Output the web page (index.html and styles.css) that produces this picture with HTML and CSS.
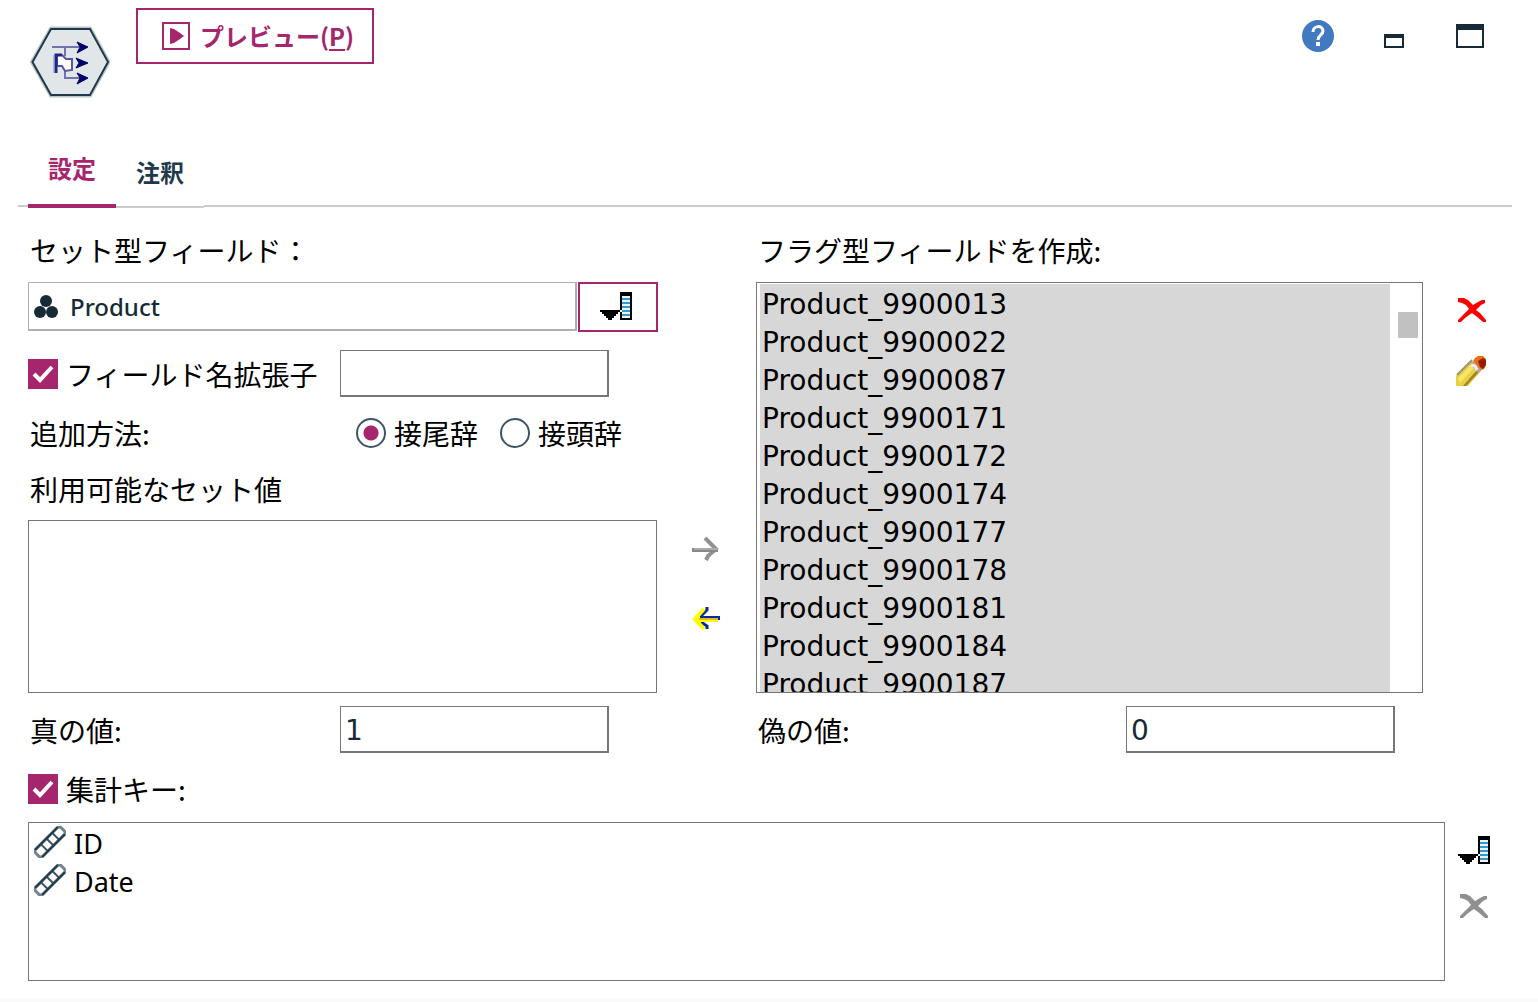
FILE: index.html
```html
<!DOCTYPE html>
<html lang="ja">
<head>
<meta charset="utf-8">
<meta name="viewport" content="width=device-width, initial-scale=1">
<title>フラグ設定</title>
<link rel="stylesheet" href="styles.css">
</head>
<body>
<svg class="defs" aria-hidden="true">
  <symbol id="picker" viewBox="0 0 32 28">
    <path d="M0 18h20v2h-2v2h-2v2h-2v2h-2v2H8v-2H6v-2H4v-2H2v-2H0z"/>
    <path d="M20 0h12v28H20z"/>
    <path d="M22 4h8v22h-8z" fill="#e8f6fc"/>
    <path d="M22 7h8M22 11h8M22 15h8M22 19h8M22 23h8" stroke="#3399cc" stroke-width="2"/>
    <path d="M20 18h2v2h-2z" fill="#fff"/>
  </symbol>
  <symbol id="cross" viewBox="0 0 28 24">
    <path d="M0 0h6l4 2 5 5 5-3 4-2h3v3l-4 2-5 5 4 3 6 7v2h-3l-7-6-4-3-3 2-4 3-4 4H0v-2l4-4 4-4 3-3-3-4-4-2-4-1z" fill="currentColor"/>
  </symbol>
  <symbol id="chain" viewBox="0 0 32 32">
    <g transform="rotate(-45 16 16)" fill="none">
      <rect x="-2" y="11" width="36" height="10" rx="3" stroke="#75858f" stroke-width="3"/>
      <path d="M8 11v10M16 11v10M24 11v10" stroke="#3c5364" stroke-width="2"/>
      <path d="M0 11h32M0 21h32" stroke="#20394a" stroke-width="2"/>
    </g>
  </symbol>
</svg>

<form class="dialog">
  <header class="header">
    <svg class="node-icon" width="80" height="72" viewBox="30 26 80 72" aria-hidden="true">
      <path d="M51 28.500h39L108.500 62 90 95.500H51L32 62z" fill="#e1e6e9" stroke="#b9c4ca" stroke-width="4"/>
      <path d="M51 29h39L108 62 90 95H51L32.500 62z" fill="#e1e6e9" stroke="#20394a" stroke-width="2"/>
      <path d="M52 47h27M65 48v8M65 70v8h15" fill="none" stroke="#7272b0" stroke-width="2"/>
      <path d="M57 55h5l4 4h6v11l-7 1-3-5h-5z" fill="#fff" stroke="#5656a5" stroke-width="2"/>
      <path d="M56 73V55h6" fill="none" stroke="#24248c" stroke-width="3"/>
      <path d="M54 55v18" stroke="#6b9aca"/>
      <path d="M77 42l11 5-11 6 3-6zM76 58l12 5-12 5 3-5zM77 73l11 5-11 6 3-6z" fill="#00006c" stroke="#00006c"/>
    </svg>
    <button type="button" class="preview">
      <svg width="28" height="28" viewBox="0 0 28 28" aria-hidden="true"><path d="M1 1h26v26H1z" fill="none" stroke="#a6266e" stroke-width="2"/><path d="M8 6l4 1 3 2 3 2 4 3-4 3-3 2-3 2-4 1z" fill="#a6266e"/></svg>
      <span>プレビュー(<u>P</u>)</span>
    </button>
    <div class="window-tools">
      <button type="button" class="icon-button help" aria-label="ヘルプ">
        <svg width="32" height="32" viewBox="0 0 32 32"><circle cx="16" cy="16" r="16" fill="#427ac1"/><path d="M11 12c0-7 10-7 10-1 0 4-5 4-5 9" fill="none" stroke="#fff" stroke-width="3"/><path d="M14 22h4v4h-4z" fill="#fff"/></svg>
      </button>
      <button type="button" class="icon-button" aria-label="最小化">
        <svg width="20" height="14" viewBox="0 0 20 14"><path d="M0 0h20v14H0z" fill="#162b36"/><path d="M2 4h16v8H2z" fill="#fff"/></svg>
      </button>
      <button type="button" class="icon-button" aria-label="最大化">
        <svg width="28" height="24" viewBox="0 0 28 24"><path d="M0 0h28v24H0z" fill="#162b36"/><path d="M2 6h24v16H2z" fill="#fff"/></svg>
      </button>
    </div>
  </header>

  <nav class="tabs" role="tablist">
    <button type="button" class="tab tab-active" role="tab" aria-selected="true">設定</button>
    <button type="button" class="tab" role="tab" aria-selected="false">注釈</button>
  </nav>

  <main class="content">
    <div class="columns">
      <section class="source">
        <label class="title" for="set-field">セット型フィールド：</label>
        <div class="picker-row">
          <div class="field-box">
            <svg width="28" height="28" viewBox="32 292 28 28" aria-hidden="true"><g fill="#162b36"><circle cx="46" cy="300" r="6"/><circle cx="40" cy="311" r="6"/><circle cx="52" cy="311" r="6"/></g></svg>
            <input id="set-field" type="text" value="Product" readonly>
          </div>
          <button type="button" class="picker-button" aria-label="フィールドを選択"><svg width="32" height="28"><use href="#picker"/></svg></button>
        </div>
        <div class="form-row extension">
          <label class="option"><input type="checkbox" checked>フィールド名拡張子</label>
          <input type="text" class="text-input" aria-label="拡張子">
        </div>
        <div class="form-row method" role="radiogroup" aria-labelledby="method">
          <span id="method">追加方法:</span>
          <div class="radios">
            <label class="option"><input type="radio" name="method" checked>接尾辞</label>
            <label class="option"><input type="radio" name="method">接頭辞</label>
          </div>
        </div>
        <h2 class="title values-title" id="available">利用可能なセット値</h2>
        <ul class="list available" role="listbox" aria-labelledby="available"></ul>
      </section>

      <div class="movers">
        <button type="button" class="icon-button" aria-label="追加">
          <svg width="28" height="26" viewBox="0 0 28 26"><path d="M13 2l3 3 8 8-8 7-2 4" fill="none" stroke="#929292" stroke-width="4"/><path d="M0 14h26" stroke="#888" stroke-width="4"/><path d="M2 13h24" stroke="#aaa" stroke-width="2"/></svg>
        </button>
        <button type="button" class="icon-button" aria-label="削除">
          <svg width="28" height="26" viewBox="0 0 28 26"><path d="M15 1v3l-7 7M9 16l6 4v3" fill="none" stroke="#002d94" stroke-width="3"/><path d="M12 3L3 13l9 10M2 14h24" fill="none" stroke="#ff0" stroke-width="4"/><path d="M7 13h19" stroke="#e8b52a" stroke-width="2"/><path d="M8 11h19v3" fill="none" stroke="#002d94" stroke-width="2"/></svg>
        </button>
      </div>

      <section class="target">
        <h2 class="title" id="flags">フラグ型フィールドを作成:</h2>
        <div class="list flag-list">
          <ul class="flag-items" role="listbox" aria-labelledby="flags" aria-multiselectable="true">
            <li role="option" aria-selected="true">Product_9900013</li>
            <li role="option" aria-selected="true">Product_9900022</li>
            <li role="option" aria-selected="true">Product_9900087</li>
            <li role="option" aria-selected="true">Product_9900171</li>
            <li role="option" aria-selected="true">Product_9900172</li>
            <li role="option" aria-selected="true">Product_9900174</li>
            <li role="option" aria-selected="true">Product_9900177</li>
            <li role="option" aria-selected="true">Product_9900178</li>
            <li role="option" aria-selected="true">Product_9900181</li>
            <li role="option" aria-selected="true">Product_9900184</li>
            <li role="option" aria-selected="true">Product_9900187</li>
          </ul>
          <div class="scrollbar"><div class="thumb"></div></div>
        </div>
      </section>

      <div class="target-tools">
        <button type="button" class="icon-button remove" aria-label="フラグを削除"><svg width="28" height="24"><use href="#cross"/></svg></button>
        <button type="button" class="icon-button" aria-label="編集">
          <svg width="30" height="30" viewBox="0 0 30 30"><path d="M0 20L15 5l10 10-13 15H0z" fill="#e8cf43"/><path d="M2 22L15 9l3 3L4 27z" fill="#f8e567"/><path d="M23 16L10 30H7l14-16z" fill="#9a8525"/><path d="M1 19L16 4" stroke="#9b9470" stroke-width="2"/><path d="M14 8l3-3 9 9-4 3z" fill="#aaa"/><path d="M15 9l4 1 2 4" fill="none" stroke="#eee" stroke-width="3"/><path d="M17 5l2-3 3-2h5l3 3v6l-2 4-3 1z" fill="#e8700f"/><path d="M22 5l5-3 3 2v5l-3 4-3-2z" fill="#981c00"/></svg>
        </button>
      </div>
    </div>

    <div class="columns value-fields">
      <div class="form-row"><label for="true-value">真の値:</label><input id="true-value" type="text" class="text-input" value="1"></div>
      <div class="form-row false-value"><label for="false-value">偽の値:</label><input id="false-value" type="text" class="text-input" value="0"></div>
    </div>

    <div class="keys-title"><label class="option"><input type="checkbox" checked>集計キー:</label></div>
    <div class="keys">
      <ul class="list key-list" role="listbox" aria-label="集計キー">
        <li role="option"><svg width="32" height="32"><use href="#chain"/></svg><span>ID</span></li>
        <li role="option"><svg width="32" height="32"><use href="#chain"/></svg><span>Date</span></li>
      </ul>
      <div class="key-tools">
        <button type="button" class="icon-button" aria-label="キーを選択"><svg width="32" height="28"><use href="#picker"/></svg></button>
        <button type="button" class="icon-button key-remove" aria-label="キーを削除" disabled><svg width="28" height="24"><use href="#cross"/></svg></button>
      </div>
    </div>
  </main>
</form>
</body>
</html>
```
FILE: styles.css
```css
:root {
  --accent: #a6266e;
  --ink: #162b36;
  --line: #767676;
  --ui: "Noto Sans", "Noto Sans CJK JP", sans-serif;
  --jp: "Noto Sans CJK JP", sans-serif;
}

* { box-sizing: border-box; }

body {
  margin: 0;
  background: #fafafa;
  color: #000;
  font: 28px/40px var(--jp);
}

button, input { font: inherit; }
svg { display: block; flex: none; }
ul, h2 { margin: 0; padding: 0; font: inherit; list-style: none; }
.defs { position: absolute; width: 0; height: 0; }

.dialog { background: #fff; }

.header {
  display: flex;
  align-items: flex-start;
  height: 144px;
  padding: 8px 54px 0 30px;
}
.node-icon { margin-top: 18px; }
.preview {
  display: flex;
  align-items: center;
  gap: 10px;
  height: 56px;
  margin-left: 26px;
  padding: 0 18px 0 24px;
  border: 2px solid var(--accent);
  background: #fff;
  color: var(--accent);
  font-size: 24px;
  font-weight: 700;
  line-height: 32px;
}
.preview u { text-decoration-thickness: 2px; text-underline-offset: 3px; }

.window-tools {
  display: flex;
  align-items: flex-end;
  gap: 52px;
  height: 40px;
  margin-left: auto;
}
.help { align-self: center; margin-right: -2px; margin-top: 16px; }

.icon-button {
  display: block;
  padding: 0;
  border: 0;
  background: none;
  color: inherit;
}

.tabs {
  display: flex;
  align-items: flex-end;
  height: 64px;
  margin: 0 26px 0 18px;
  padding-left: 10px;
  background: linear-gradient(#ccc, #ccc) 0 61px / 100% 2px no-repeat;
}
.tab {
  width: 88px;
  height: 60px;
  padding: 0 0 10px;
  border: 0;
  border-bottom: 2px solid #ccc;
  background: #fff;
  color: #20394a;
  font-size: 24px;
  font-weight: 700;
  line-height: 32px;
}
.tab-active {
  padding-bottom: 16px;
  border-bottom: 4px solid var(--accent);
  color: var(--accent);
}

.content { padding: 22px 0 17px 28px; }
.columns {
  display: grid;
  grid-template-columns: minmax(0, 630fr) 98px minmax(0, 667fr) 115px;
}
.title { display: block; padding-left: 2px; }
.source, .target { display: flex; flex-direction: column; }

.picker-row { display: flex; gap: 1px; margin-top: 12px; }
.field-box {
  display: flex;
  flex: 1;
  align-items: center;
  gap: 10px;
  min-width: 0;
  height: 49px;
  padding: 1px 3px 0;
  border: solid #b0b0b0;
  border-width: 1px 2px 2px 1px;
}
.field-box input {
  flex: 1;
  min-width: 0;
  height: 40px;
  padding: 0;
  border: 0;
  outline: 0;
  background: none;
  color: var(--ink);
  font-family: var(--ui);
  font-size: 24px;
  font-weight: 500;
}
.picker-button {
  display: grid;
  place-items: center;
  width: 80px;
  height: 50px;
  padding: 0 4px 2px 0;
  border: 2px solid var(--accent);
  background: #fff;
}

.form-row {
  display: grid;
  grid-template-columns: 310px 269px;
  align-items: center;
  padding-left: 2px;
}
.extension { margin-top: 18px; }
.method { margin-top: 16px; }
.values-title { margin-top: 16px; }

.text-input {
  width: 100%;
  height: 47px;
  padding: 2px 4px 0;
  border: solid var(--line);
  border-width: 1px 2px 2px 1px;
  background: #fff;
  color: var(--ink);
  font-family: "DejaVu Sans", sans-serif;
}

.option { display: flex; align-items: center; gap: 8px; white-space: nowrap; }
.extension .option { margin-left: -2px; }
.radios { display: flex; gap: 22px; padding-left: 16px; }

input[type="checkbox"], input[type="radio"] {
  flex: none;
  appearance: none;
  width: 30px;
  height: 30px;
  margin: 0;
}
input[type="checkbox"] { border: 1px solid var(--accent); }
input[type="checkbox"]:checked {
  background: var(--accent) url("data:image/svg+xml,%3Csvg xmlns='http://www.w3.org/2000/svg' viewBox='0 0 28 28'%3E%3Cpath d='M5 14l6 6L23 7' fill='none' stroke='white' stroke-width='4'/%3E%3C/svg%3E") center / 28px 28px no-repeat;
}
input[type="radio"] { border: 2px solid #3c5566; border-radius: 50%; }
input[type="radio"]:checked { background: radial-gradient(circle, var(--accent) 7px, #fff 8px); }

.list { border: 1px solid var(--line); background: #fff; }
.available { width: calc(100% - 1px); height: 173px; margin-top: 11px; }

.movers {
  display: flex;
  flex-direction: column;
  align-items: center;
  gap: 44px;
  padding: 306px 2px 0 0;
}

.flag-list {
  display: flex;
  height: 411px;
  margin-top: 12px;
  padding: 1px 0 0 3px;
  overflow: hidden;
}
.flag-items {
  flex: 1;
  padding: 2px 0 0 2px;
  background: #d7d7d7;
  font-family: "DejaVu Sans", sans-serif;
  line-height: 38px;
}
.scrollbar { width: 32px; padding: 28px 4px 0 8px; }
.thumb { height: 26px; border-radius: 1px; background: #c1c1c1; }

.target-tools { padding: 68px 0 0 33px; }
.remove { margin: 0 0 34px 2px; color: #f00; }

.value-fields { margin-top: 13px; }
.false-value { grid-column: 3; grid-template-columns: 368px 269px; }

.keys-title { margin-top: 16px; }
.keys { display: flex; margin-top: 13px; }
.key-list {
  flex: 1;
  height: 159px;
  padding-left: 5px;
  font-family: var(--ui);
  font-size: 27px;
}
.key-list li { display: flex; align-items: center; gap: 8px; height: 38px; line-height: 34px; }
.key-list span { padding-top: 4px; }
.key-tools { width: 93px; padding: 14px 0 0 13px; }
.key-remove { margin: 30px 0 0 2px; color: #909090; }
```
